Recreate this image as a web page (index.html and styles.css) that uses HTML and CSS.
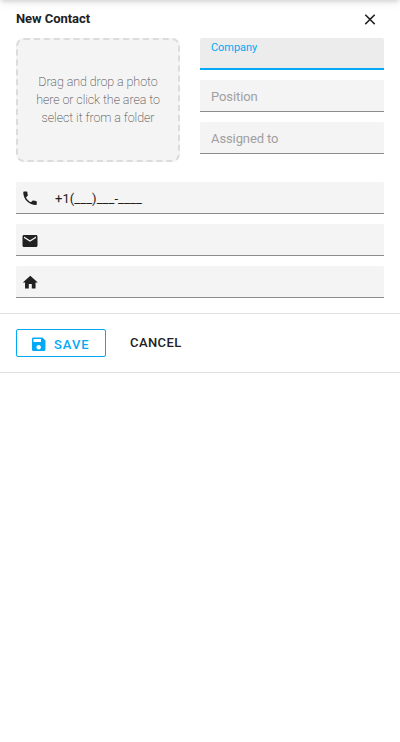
FILE: index.html
```html
<!DOCTYPE html>
<html lang="en">
<head>
<meta charset="utf-8">
<title>New Contact</title>
<link rel="stylesheet" href="styles.css">
</head>
<body>
<div class="toolbar-shadow"></div>
<form class="panel">
  <header class="header">
    <h1 class="title">New Contact</h1>
    <svg class="icon" viewBox="0 0 24 24"><path d="M19 6.41L17.59 5 12 10.59 6.41 5 5 6.41 10.59 12 5 17.59 6.41 19 12 13.41 17.59 19 19 17.59 13.41 12z" transform="translate(0 .5)"/></svg>
  </header>
  <section class="top">
    <div class="dropzone">Drag and drop a photo<br>here or click the area to<br>select it from a folder</div>
    <div class="fields">
      <div class="field focused"><span class="label">Company</span></div>
      <div class="field"><span class="placeholder">Position</span></div>
      <div class="field"><span class="placeholder">Assigned to</span></div>
    </div>
  </section>
  <section class="fields contacts">
    <div class="field with-icon">
      <svg class="icon" viewBox="0 0 24 24"><path d="M6.62 10.79c1.44 2.83 3.76 5.14 6.59 6.59l2.2-2.2c.27-.27.67-.36 1.02-.24 1.12.37 2.33.57 3.57.57.55 0 1 .45 1 1V20c0 .55-.45 1-1 1-9.39 0-17-7.61-17-17 0-.55.45-1 1-1h3.5c.55 0 1 .45 1 1 0 1.25.2 2.45.57 3.57.11.35.03.74-.25 1.02l-2.2 2.2z" transform="translate(0 .4)"/></svg>
      <span class="value">+1(___)___-____</span>
    </div>
    <div class="field with-icon mail">
      <svg class="icon" viewBox="0 0 24 24"><path d="M20 4H4c-1.1 0-1.99.9-1.99 2L2 18c0 1.1.9 2 2 2h16c1.1 0 2-.9 2-2V6c0-1.1-.9-2-2-2zm0 4l-8 5-8-5V6l8 5 8-5v2z"/></svg>
    </div>
    <div class="field with-icon">
      <svg class="icon" viewBox="0 0 24 24"><path d="M10 20v-6h4v6h5v-8h3L12 3 2 12h3v8z" transform="translate(.4 .5)"/></svg>
    </div>
  </section>
  <footer class="footer">
    <div class="button save">
      <svg class="icon" viewBox="0 0 24 24"><path d="M17 3H5c-1.11 0-2 .9-2 2v14c0 1.1.89 2 2 2h14c1.1 0 2-.9 2-2V7l-4-4zm-5 16c-1.66 0-3-1.34-3-3s1.34-3 3-3 3 1.34 3 3-1.34 3-3 3zm3-10H5V5h10v4z" transform="translate(-.4 .3)"/></svg>
      <span>SAVE</span>
    </div>
    <div class="button cancel">CANCEL</div>
  </footer>
</form>
</body>
</html>
```
FILE: styles.css
```css
* { box-sizing: border-box; }
body {
  margin: 0;
  background: #fff;
  color: #212121;
  font: 13px/18px Roboto, sans-serif;
  overflow: hidden;
}
.toolbar-shadow {
  position: absolute;
  top: -10px;
  left: 0;
  right: 0;
  height: 10px;
  box-shadow: 0 2px 4px -1px rgba(0,0,0,.14), 0 3px 10px rgba(0,0,0,.08);
}
.icon { display: block; flex: none; width: 18px; height: 18px; fill: currentColor; }
.header {
  display: flex;
  justify-content: space-between;
  height: 38px;
  padding: 10px 21px 0 16px;
}
.title { margin: 0; font-size: 13px; line-height: 18px; font-weight: 700; letter-spacing: -.05px; }
.top {
  display: grid;
  grid-template-columns: 164px 184px;
  gap: 20px;
  padding: 0 16px;
}
.dropzone {
  display: flex;
  align-items: center;
  justify-content: center;
  height: 124px;
  border: 2px dashed #dcdcdc;
  border-radius: 8px;
  background: #f4f4f4;
  color: #505050;
  font-size: 12.5px;
  font-weight: 200;
  letter-spacing: -.08px;
  text-align: center;
}
.fields { display: flex; flex-direction: column; gap: 10px; }
.field {
  height: 32px;
  padding: 8px 11px 0;
  border-bottom: 1px solid #8c8c8c;
  border-radius: 2px 2px 0 0;
  background: #f4f4f4;
}
.focused { padding-top: 0; border-bottom: 2px solid #03a9f4; background: #ececec; }
.label { display: block; color: #03a9f4; font-size: 11px; line-height: 19px; letter-spacing: -.06px; }
.placeholder { display: block; color: #a0a0a0; letter-spacing: -.1px; }
.contacts { padding: 20px 16px 15px; }
.with-icon { display: flex; gap: 16px; padding: 7px 5px 0; }
.mail { padding-top: 8px; }
.value { padding-top: 1px; letter-spacing: .06px; }
.footer {
  display: flex;
  align-items: flex-start;
  height: 60px;
  padding-top: 15px;
  padding-left: 16px;
  border: solid #e0e0e0;
  border-width: 1px 0;
}
.button { font-weight: 500; letter-spacing: .4px; }
.save {
  display: flex;
  gap: 6px;
  width: 90px;
  height: 28px;
  padding: 5px 13px 0;
  border: 1px solid #03a9f4;
  border-radius: 2px;
  color: #03a9f4;
  letter-spacing: 1px;
}
.save span { padding-top: 1px; }
.cancel { padding: 5px 0 0 24px; }
```
